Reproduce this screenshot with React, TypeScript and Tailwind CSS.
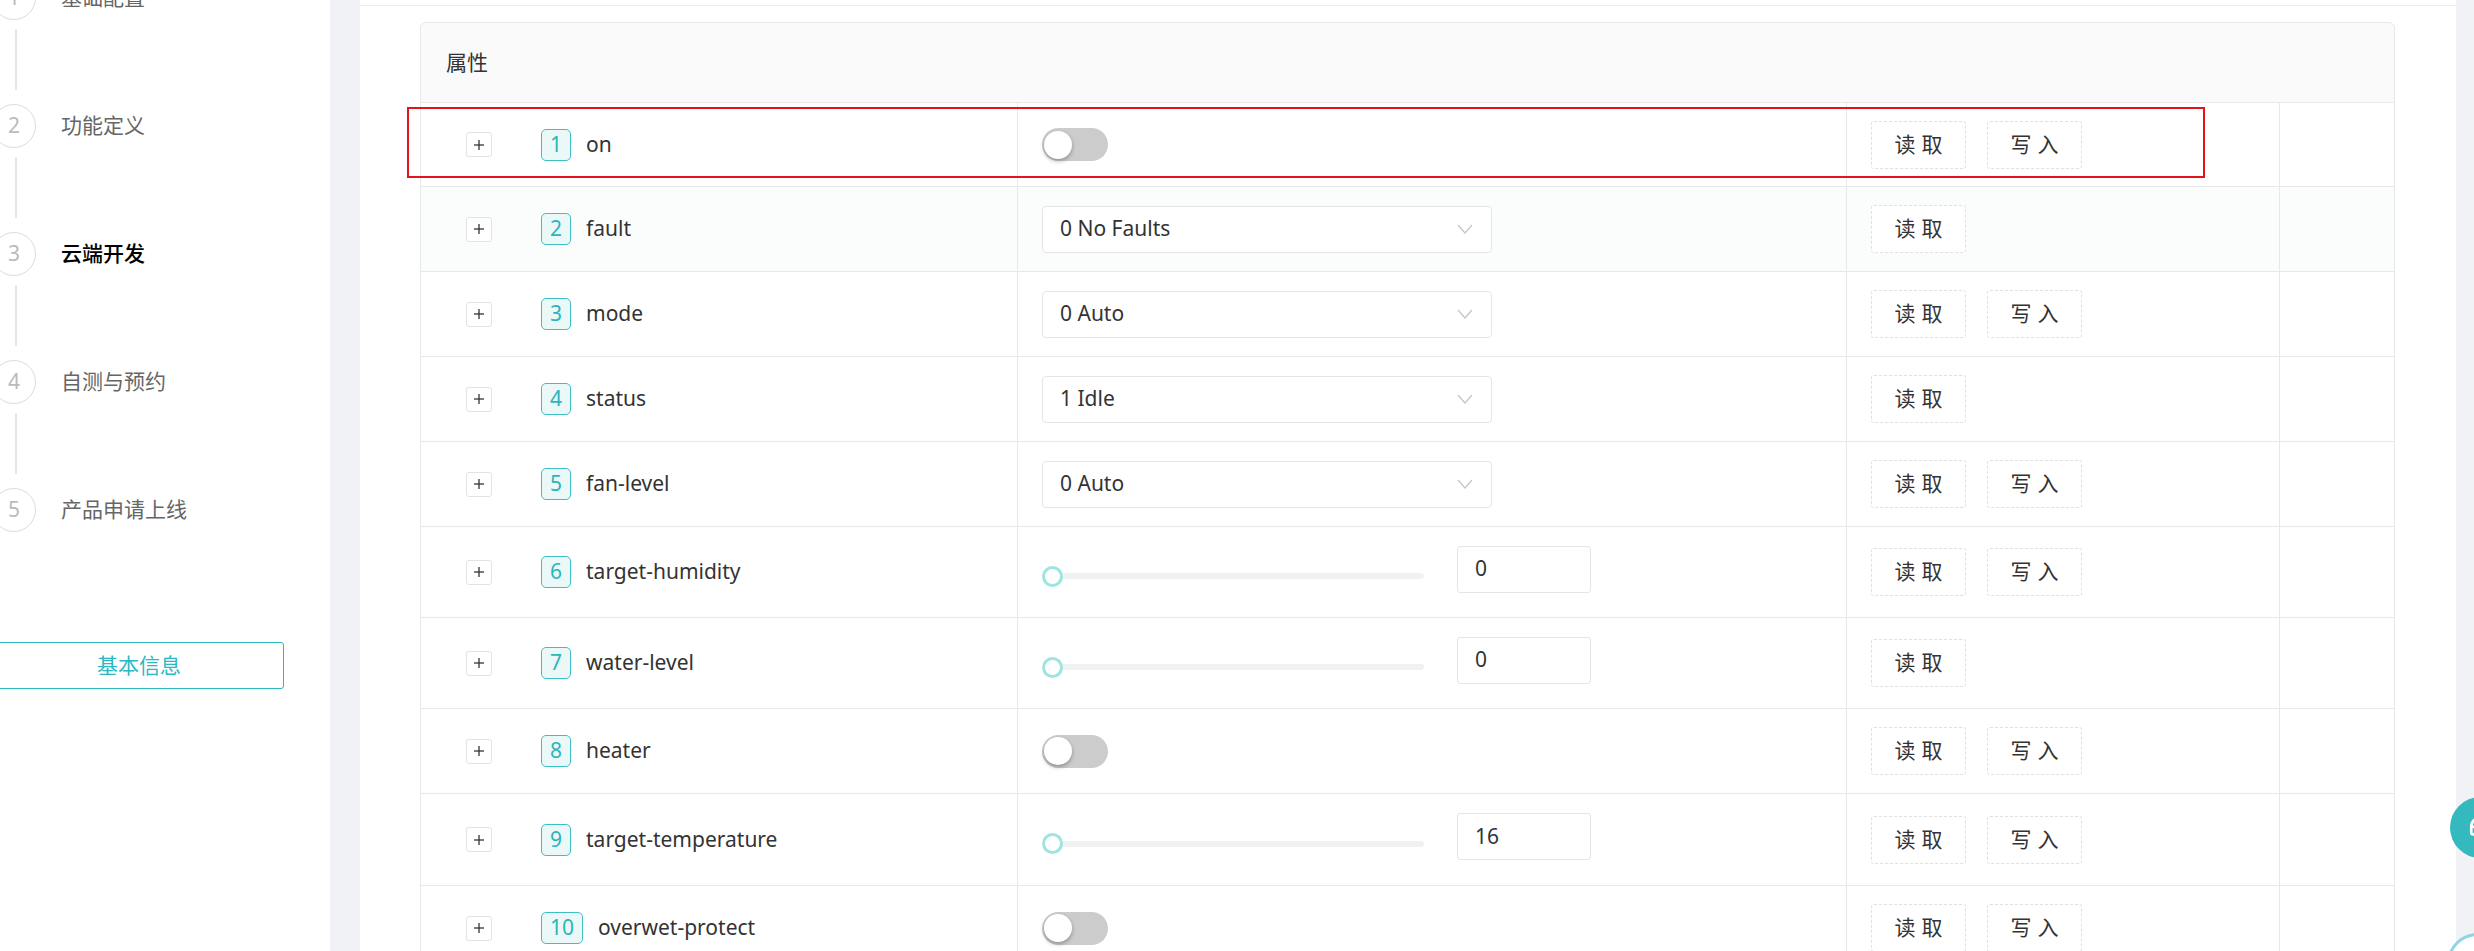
import React from 'react';
import { Headset } from 'lucide-react';

// 左侧步骤
const STEPS = ['基础配置', '功能定义', '云端开发', '自测与预约', '产品申请上线'];

type Control =
    | { kind: 'toggle' }
    | { kind: 'select'; value: string }
    | { kind: 'slider'; value: string };

interface Prop {
    id: number;
    name: string;
    control: Control;
    write: boolean;
    h: string;
    bg?: string;
}

// 属性列表
const PROPS: Prop[] = [
    { id: 1, name: 'on', control: { kind: 'toggle' }, write: true, h: 'h-[84px]' },
    { id: 2, name: 'fault', control: { kind: 'select', value: '0 No Faults' }, write: false, h: 'h-[85px]', bg: 'bg-[#fafdfc]' },
    { id: 3, name: 'mode', control: { kind: 'select', value: '0 Auto' }, write: true, h: 'h-[85px]' },
    { id: 4, name: 'status', control: { kind: 'select', value: '1 Idle' }, write: false, h: 'h-[85px]' },
    { id: 5, name: 'fan-level', control: { kind: 'select', value: '0 Auto' }, write: true, h: 'h-[85px]' },
    { id: 6, name: 'target-humidity', control: { kind: 'slider', value: '0' }, write: true, h: 'h-[91px]' },
    { id: 7, name: 'water-level', control: { kind: 'slider', value: '0' }, write: false, h: 'h-[91px]' },
    { id: 8, name: 'heater', control: { kind: 'toggle' }, write: true, h: 'h-[85px]' },
    { id: 9, name: 'target-temperature', control: { kind: 'slider', value: '16' }, write: true, h: 'h-[92px]' },
    { id: 10, name: 'overwet-protect', control: { kind: 'toggle' }, write: true, h: 'h-[85px]' },
];

const Toggle = () => (
    <div className="relative h-[33px] w-[66px] rounded-full bg-[#cccccc]">
        <div className="absolute left-[2px] top-[2.5px] h-[28px] w-[28px] rounded-full bg-white shadow-[0_2px_4px_rgba(0,0,0,0.3)]" />
    </div>
);

const Select = ({ value }: { value: string }) => (
    <div className="flex h-[47px] w-[450px] items-center justify-between rounded-[4px] border border-[#e6e6e6] bg-white pl-[17px] pr-[18px] text-[21px] text-[#333]">
        <span>{value}</span>
        <svg width="16" height="10" viewBox="0 0 16 10" fill="none">
            <polyline points="1,1 8,9 15,1" stroke="#c4c4c4" strokeWidth="1.2" />
        </svg>
    </div>
);

const Slider = ({ value }: { value: string }) => (
    <div className="flex items-center">
        <div className="relative mt-[8px] h-[21px] w-[382px]">
            <div className="absolute left-[10px] right-0 top-[7.5px] h-[6px] rounded-full bg-[#f1f1f1]" />
            <div className="absolute left-0 top-0 h-[21px] w-[21px] rounded-full border-[3px] border-[#9ee5e2] bg-white" />
        </div>
        <div className="mb-[6px] ml-[33px] flex h-[47px] w-[134px] items-center rounded-[3px] border border-[#e6e6e6] bg-white pl-[17px] text-[21px] text-[#333]">
            {value}
        </div>
    </div>
);

const ActionButton = ({ a, b }: { a: string; b: string }) => (
    <button className="flex h-[48px] w-[95px] items-center justify-center rounded-[3px] border border-dashed border-[#e0e0e0] bg-white text-[21px] text-[#333]">
        <span className="mr-[6px]">{a}</span>
        <span>{b}</span>
    </button>
);

const App: React.FC = () => {
    return (
        <div className="relative flex h-[951px] w-[2474px] overflow-hidden bg-white font-['Noto_Sans','Noto_Sans_CJK_SC',sans-serif]">
            {/* Sidebar */}
            <aside className="w-[330px] shrink-0 bg-white">
                <div className="mt-[-24px] flex flex-col">
                    {STEPS.map((step, i) => (
                        <div key={step} className="flex flex-col">
                            <div className="flex h-[44px] items-center">
                                <div className="ml-[-8px] flex h-[44px] w-[44px] shrink-0 items-center justify-center rounded-full border border-[#dcdcdc] text-[21px] text-[#bbbbbb]">
                                    {i + 1}
                                </div>
                                <span className={i === 2 ? 'ml-[25px] text-[21px] font-medium text-black' : 'ml-[25px] text-[21px] text-[#666]'}>
                                    {step}
                                </span>
                            </div>
                            {i < STEPS.length - 1 && (
                                <div className="mb-[14px] ml-[15px] mt-[9px] h-[61px] w-[2px] bg-[#e6e6e6]" />
                            )}
                        </div>
                    ))}
                </div>
                <button className="ml-[-6px] mt-[110px] flex h-[47px] w-[290px] items-center justify-center rounded-[3px] border border-[#2bb8c4] text-[21px] text-[#2bb8c4]">
                    基本信息
                </button>
            </aside>

            {/* Gap */}
            <div className="w-[30px] shrink-0 bg-[#f0f2f5]" />

            {/* Main */}
            <main className="w-[2096px] shrink-0 bg-white">
                <div className="h-[6px] border-b border-[#ebebeb]" />

                <div className="relative ml-[60px] mt-[16px] w-[1975px]">
                    {/* Header */}
                    <div className="flex h-[81px] items-center rounded-t-[6px] border border-[#e8e8e8] bg-[#fafafa] px-[25px] text-[21px] text-[#333]">
                        属性
                    </div>

                    {/* Rows */}
                    <div className="border-x border-[#e8e8e8]">
                        {PROPS.map((p) => (
                            <div
                                key={p.id}
                                className={`grid grid-cols-[597px_829px_433px_114px] border-b border-[#e8e8e8] ${p.h} ${p.bg ?? 'bg-white'}`}
                            >
                                <div className="flex items-center border-r border-[#e8e8e8] pl-[45px]">
                                    <div className="flex h-[25px] w-[26px] items-center justify-center rounded-[3px] border border-[#e3e3e3] bg-white">
                                        <svg width="10" height="10" viewBox="0 0 10 10">
                                            <line x1="5" y1="0" x2="5" y2="10" stroke="#333" strokeWidth="1.3" />
                                            <line x1="0" y1="5" x2="10" y2="5" stroke="#333" strokeWidth="1.3" />
                                        </svg>
                                    </div>
                                    <div className="ml-[49px] flex h-[32px] items-center rounded-[5px] border border-[#3dbfc6] bg-[#ebf8f8] px-[8px] text-[21px] text-[#2cb5bd]">
                                        {p.id}
                                    </div>
                                    <span className="ml-[15px] text-[21px] text-[#333]">{p.name}</span>
                                </div>

                                <div className="flex items-center border-r border-[#e8e8e8] pl-[24px]">
                                    {p.control.kind === 'toggle' && <Toggle />}
                                    {p.control.kind === 'select' && <Select value={p.control.value} />}
                                    {p.control.kind === 'slider' && <Slider value={p.control.value} />}
                                </div>

                                <div className="flex items-center gap-[21px] border-r border-[#e8e8e8] pl-[24px]">
                                    <ActionButton a="读" b="取" />
                                    {p.write && <ActionButton a="写" b="入" />}
                                </div>

                                <div />
                            </div>
                        ))}
                    </div>

                    {/* Highlight box */}
                    <div className="pointer-events-none absolute left-[-13px] top-[85px] h-[71px] w-[1798px] border-2 border-[#e4121b]" />
                </div>
            </main>

            {/* Right strip */}
            <div className="w-[18px] shrink-0 bg-[#f0f2f5]" />

            {/* Floating buttons */}
            <div className="absolute left-[2450px] top-[797px] flex h-[61px] w-[61px] items-center justify-center rounded-full bg-[#33b9be]">
                <Headset size={26} color="#ffffff" strokeWidth={2.5} />
            </div>
            <div className="absolute left-[2447px] top-[933px] h-[61px] w-[61px] rounded-full border-[3px] border-[#8fd3e6] bg-white" />
        </div>
    );
};

export default App;
